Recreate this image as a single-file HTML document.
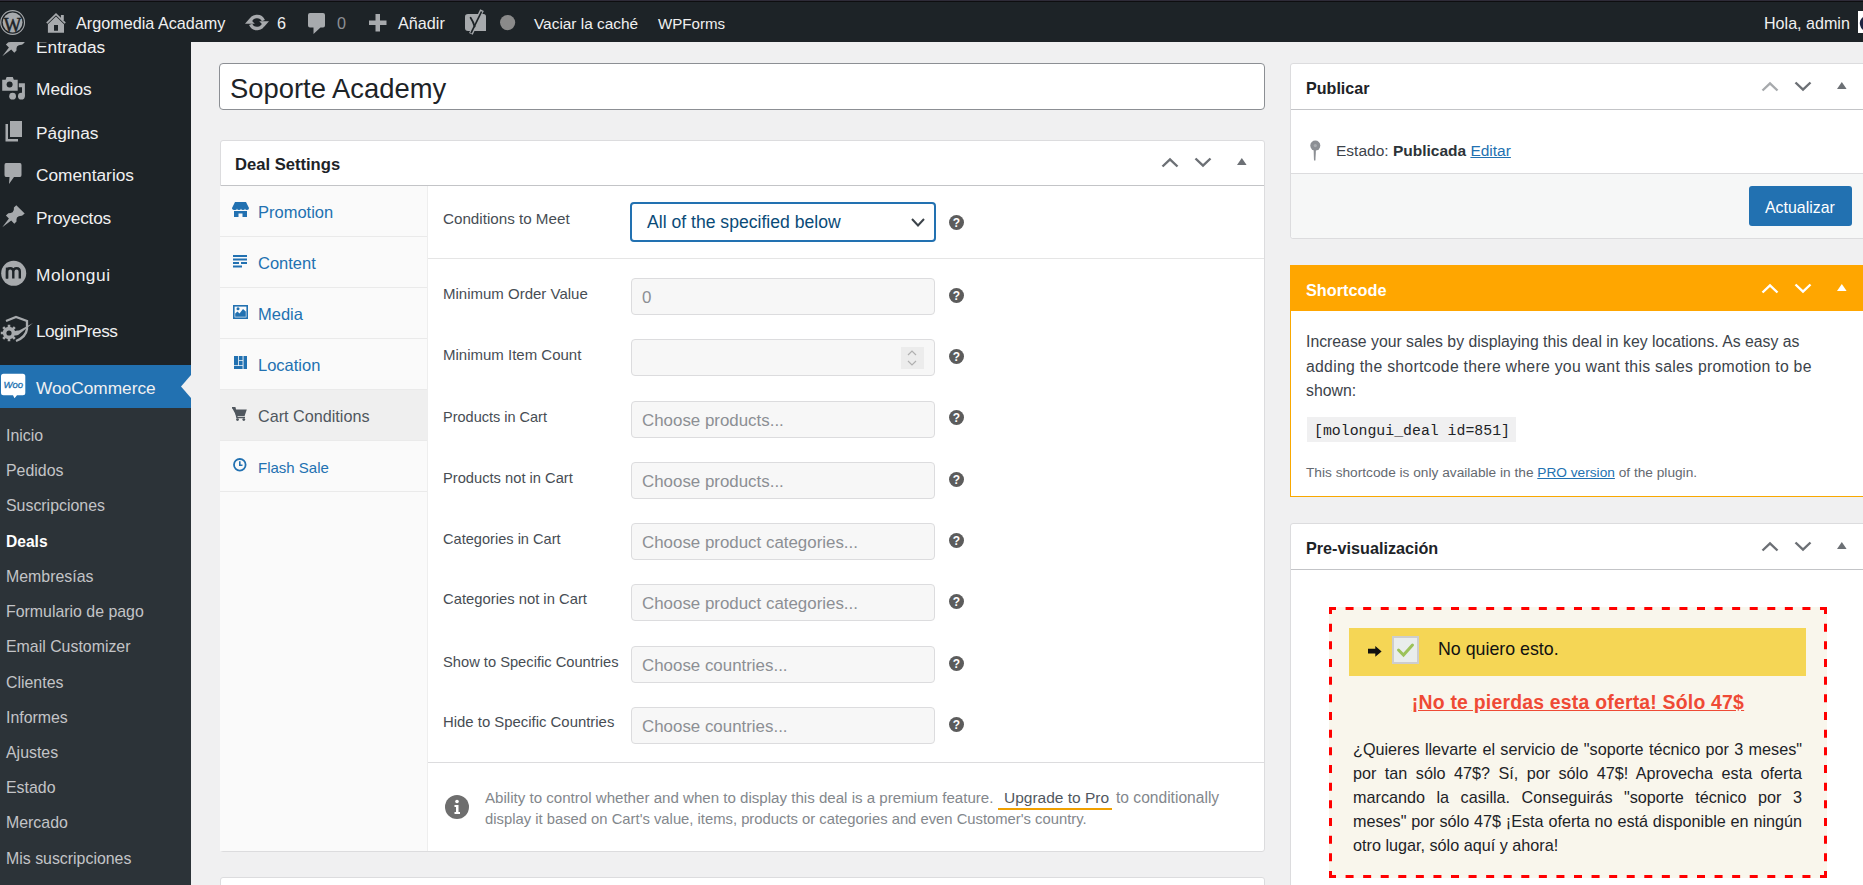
<!DOCTYPE html>
<html><head><meta charset="utf-8">
<style>
*{box-sizing:border-box;margin:0;padding:0}
html,body{width:1863px;height:885px;overflow:hidden;background:#f0f0f1;font-family:"Liberation Sans",sans-serif;color:#1d2327;position:relative}
.a{position:absolute;white-space:nowrap}
svg.a{overflow:visible}
</style></head><body>

<div class="a" style="left:0;top:0;width:1863px;height:42px;z-index:10">
<div class="a" style="left:0px;top:0px;width:1863px;height:42px;background:#1d2327"></div>
<div class="a" style="left:0px;top:0px;width:1863px;height:1px;background:#2e2b38"></div>
<div class="a" style="left:0px;top:1px;width:1863px;height:1px;background:#0e0e10"></div>
<svg class="a" style="left:0px;top:10px" width="26" height="26" viewBox="0 0 26 26"><circle cx="12.6" cy="12.5" r="11.9" fill="none" stroke="#a7aaad" stroke-width="1.1"/><circle cx="12.6" cy="12.5" r="9.9" fill="#a7aaad"/><text x="12.5" y="0" transform="translate(0,21.8) scale(1,1.18)" text-anchor="middle" font-family="Liberation Serif" font-size="18.5" fill="#1d2327" stroke="#1d2327" stroke-width="0.5">W</text></svg>
<svg class="a" style="left:46px;top:12px" width="21" height="22" viewBox="0 0 21 22"><path d="M0.8 11.2 L10 2.2 L19.2 11.2" fill="none" stroke="#a7aaad" stroke-width="1.7"/><rect x="14.9" y="3" width="2.9" height="5" fill="#a7aaad"/><path d="M1.9 12.3 L10 4.6 L18 12.3 V20.7 H1.9 Z M8 13 V18.7 H12 V13 Z" fill="#a7aaad" fill-rule="evenodd"/></svg>
<div class="a" style="left:76px;top:15px;font-size:16.2px;line-height:16.2px;color:#f0f0f1;font-weight:normal;">Argomedia Acadamy</div>
<svg class="a" style="left:245px;top:13px" width="25" height="19" viewBox="0 0 25 19"><path d="M5.2 8.8 A7 7 0 0 1 18.4 7.6" fill="none" stroke="#a7aaad" stroke-width="3.4"/><path d="M14.2 8.2 L24 8.2 L19.4 13.6 Z" fill="#a7aaad"/><path d="M18.8 10.2 A7 7 0 0 1 5.6 11.4" fill="none" stroke="#a7aaad" stroke-width="3.4"/><path d="M9.8 10.8 L0 10.8 L4.6 5.4 Z" fill="#a7aaad"/></svg>
<div class="a" style="left:277px;top:15px;font-size:16.2px;line-height:16.2px;color:#f0f0f1;font-weight:normal;">6</div>
<svg class="a" style="left:308px;top:12px" width="18" height="23" viewBox="0 0 18 23"><path d="M2 1 H15 Q17 1 17 3 V13.5 Q17 15.5 15 15.5 H12.5 L5.5 22 L5.5 15.5 H2 Q0 15.5 0 13.5 V3 Q0 1 2 1 Z" fill="#a7aaad"/></svg>
<div class="a" style="left:337px;top:15px;font-size:16.2px;line-height:16.2px;color:#8c8f94;font-weight:normal;">0</div>
<svg class="a" style="left:369px;top:14px" width="18" height="18" viewBox="0 0 18 18"><path d="M6.5 0 H11 V6.5 H17.5 V11 H11 V17.5 H6.5 V11 H0 V6.5 H6.5 Z" fill="#a7aaad"/></svg>
<div class="a" style="left:398px;top:15px;font-size:16.2px;line-height:16.2px;color:#f0f0f1;font-weight:normal;">Añadir</div>
<svg class="a" style="left:465px;top:9px" width="22" height="27" viewBox="0 0 22 27"><path d="M3 5 H18.5 Q21 5 21 7.5 V22 H3 Q0 22 0 19 V7.5 Q0 5 3 5 Z" fill="#a7aaad"/><path d="M17 1.2 L5.9 24.8" stroke="#a7aaad" stroke-width="4"/><path d="M16.6 2.5 L6 24.2" stroke="#1d2327" stroke-width="1.7"/><path d="M5.6 8.7 Q8.5 13 9.6 17.5" fill="none" stroke="#1d2327" stroke-width="1.8" stroke-linecap="round"/></svg>
<svg class="a" style="left:500px;top:15px" width="16" height="16" viewBox="0 0 16 16"><circle cx="7.6" cy="7.6" r="7.6" fill="#8a8a8a"/></svg>
<div class="a" style="left:534px;top:16px;font-size:15.4px;line-height:15.4px;color:#f0f0f1;font-weight:normal;">Vaciar la caché</div>
<div class="a" style="left:658px;top:16px;font-size:15.1px;line-height:15.1px;color:#f0f0f1;font-weight:normal;">WPForms</div>
<div class="a" style="left:1764px;top:15px;font-size:16.1px;line-height:16.1px;color:#f0f0f1;font-weight:normal;">Hola, admin</div>
<div class="a" style="left:1858px;top:11px;width:5px;height:22px;background:#fff"></div>
<svg class="a" style="left:1859px;top:15px" width="4" height="16" viewBox="0 0 4 16"><path d="M4 2 Q0 5 1 10 Q2 14 4 15 Z" fill="#1d2340"/></svg>
</div>
<div class="a" style="left:0px;top:42px;width:191px;height:843px;background:#1d2327"></div>
<div class="a" style="left:0px;top:408px;width:191px;height:477px;background:#2c3338"></div>
<div class="a" style="left:0px;top:365px;width:191px;height:43px;background:#2271b1"></div>
<svg class="a" style="left:181px;top:375px" width="10" height="23" viewBox="0 0 10 23"><path d="M10 0 L0 11.5 L10 23 Z" fill="#f0f0f1"/></svg>
<div class="a" style="left:36px;top:39px;font-size:17.3px;line-height:17.3px;color:#f0f0f1;font-weight:normal;letter-spacing:0px">Entradas</div>
<div class="a" style="left:36px;top:81px;font-size:17.3px;line-height:17.3px;color:#f0f0f1;font-weight:normal;letter-spacing:0px">Medios</div>
<div class="a" style="left:36px;top:124.6px;font-size:17.3px;line-height:17.3px;color:#f0f0f1;font-weight:normal;letter-spacing:0px">Páginas</div>
<div class="a" style="left:36px;top:166.7px;font-size:17.3px;line-height:17.3px;color:#f0f0f1;font-weight:normal;letter-spacing:0px">Comentarios</div>
<div class="a" style="left:36px;top:210px;font-size:17.3px;line-height:17.3px;color:#f0f0f1;font-weight:normal;letter-spacing:-0.2px">Proyectos</div>
<div class="a" style="left:36px;top:267px;font-size:17.3px;line-height:17.3px;color:#f0f0f1;font-weight:normal;letter-spacing:0.55px">Molongui</div>
<div class="a" style="left:36px;top:323px;font-size:17.3px;line-height:17.3px;color:#f0f0f1;font-weight:normal;letter-spacing:-0.5px">LoginPress</div>
<div class="a" style="left:36px;top:380px;font-size:17.3px;line-height:17.3px;color:#f0f0f1;font-weight:normal;letter-spacing:0px">WooCommerce</div>
<div class="a" style="left:6px;top:428.0px;font-size:15.9px;line-height:15.9px;color:#c3c4c7;font-weight:normal;">Inicio</div>
<div class="a" style="left:6px;top:463.22px;font-size:15.9px;line-height:15.9px;color:#c3c4c7;font-weight:normal;">Pedidos</div>
<div class="a" style="left:6px;top:498.44px;font-size:15.9px;line-height:15.9px;color:#c3c4c7;font-weight:normal;">Suscripciones</div>
<div class="a" style="left:6px;top:533.66px;font-size:15.6px;line-height:15.6px;color:#ffffff;font-weight:bold;">Deals</div>
<div class="a" style="left:6px;top:568.88px;font-size:15.9px;line-height:15.9px;color:#c3c4c7;font-weight:normal;">Membresías</div>
<div class="a" style="left:6px;top:604.1px;font-size:15.9px;line-height:15.9px;color:#c3c4c7;font-weight:normal;">Formulario de pago</div>
<div class="a" style="left:6px;top:639.3199999999999px;font-size:15.9px;line-height:15.9px;color:#c3c4c7;font-weight:normal;">Email Customizer</div>
<div class="a" style="left:6px;top:674.54px;font-size:15.9px;line-height:15.9px;color:#c3c4c7;font-weight:normal;">Clientes</div>
<div class="a" style="left:6px;top:709.76px;font-size:15.9px;line-height:15.9px;color:#c3c4c7;font-weight:normal;">Informes</div>
<div class="a" style="left:6px;top:744.98px;font-size:15.9px;line-height:15.9px;color:#c3c4c7;font-weight:normal;">Ajustes</div>
<div class="a" style="left:6px;top:780.2px;font-size:15.9px;line-height:15.9px;color:#c3c4c7;font-weight:normal;">Estado</div>
<div class="a" style="left:6px;top:815.42px;font-size:15.9px;line-height:15.9px;color:#c3c4c7;font-weight:normal;">Mercado</div>
<div class="a" style="left:6px;top:850.64px;font-size:15.9px;line-height:15.9px;color:#c3c4c7;font-weight:normal;">Mis suscripciones</div>
<svg class="a" style="left:0px;top:29px" width="28" height="30" viewBox="0 0 28 30"><path d="M16.3 5.2 L24.7 13.4 L22 15.8 Q18.6 15.6 17 17.6 Q16.2 19.5 16.5 21.5 L14.3 23.7 L11.2 20.6 L2.3 27.2 L8.9 18.4 L5.9 15.6 L8.3 13.3 Q10.6 13.4 12.6 12.2 Q14.4 10.4 13.9 7.6 Z" fill="#a7aaad"/></svg>
<svg class="a" style="left:0px;top:72px" width="28" height="30" viewBox="0 0 28 30"><path d="M2.2 7.8 H5.6 L6.6 4.9 H12.8 L13.8 7.8 H17.7 V18.8 H2.2 Z" fill="#a7aaad"/><circle cx="9.6" cy="12.6" r="3" fill="#1d2327"/><path d="M18.8 11.2 H24.9 V24.2 H22 V15.2 H18.8 Z" fill="#a7aaad"/><circle cx="12.6" cy="24.2" r="3.4" fill="#a7aaad"/><circle cx="21.4" cy="24.2" r="3.4" fill="#a7aaad"/></svg>
<svg class="a" style="left:4px;top:121px" width="18" height="22" viewBox="0 0 18 22"><rect x="6" y="0" width="12" height="16" fill="#a7aaad"/><path d="M4 3 V18 H14 V20.5 H1.5 V3 Z" fill="#a7aaad"/></svg>
<svg class="a" style="left:4px;top:163px" width="18" height="22" viewBox="0 0 18 22"><path d="M2 0 H16 Q17.5 0 17.5 2 V12 Q17.5 14 16 14 H10 L5 21 L5.5 14 H2 Q0.5 14 0.5 12 V2 Q0.5 0 2 0 Z" fill="#a7aaad"/></svg>
<svg class="a" style="left:0px;top:200px" width="28" height="30" viewBox="0 0 28 30"><path d="M16.3 5.2 L24.7 13.4 L22 15.8 Q18.6 15.6 17 17.6 Q16.2 19.5 16.5 21.5 L14.3 23.7 L11.2 20.6 L2.3 27.2 L8.9 18.4 L5.9 15.6 L8.3 13.3 Q10.6 13.4 12.6 12.2 Q14.4 10.4 13.9 7.6 Z" fill="#a7aaad"/></svg>
<svg class="a" style="left:1px;top:260px" width="26" height="26" viewBox="0 0 26 26"><circle cx="12.7" cy="13.3" r="12.5" fill="#a7aaad"/><path d="M6 18.5 V11.5 Q6 8.2 9.2 8.2 Q12.3 8.2 12.3 11.5 V18.5 M12.3 11.5 Q12.3 8.2 15.6 8.2 Q18.8 8.2 18.8 11.5 V18.5" fill="none" stroke="#1d2327" stroke-width="2.4"/><path d="M6 7.6 V18.5" stroke="#1d2327" stroke-width="2.4"/></svg>
<svg class="a" style="left:0px;top:315px" width="34" height="28" viewBox="0 0 34 28"><path d="M6 6 L16 2 L27 6 V14 Q26 22 16 26" fill="none" stroke="#a7aaad" stroke-width="2.3"/><circle cx="9" cy="18" r="6.2" fill="#a7aaad"/><path d="M9 9.8 V26.2 M0.8 18 H17.2 M3.2 12.2 L14.8 23.8 M14.8 12.2 L3.2 23.8" stroke="#a7aaad" stroke-width="2.6"/><circle cx="9" cy="18" r="2.6" fill="#1d2327"/><path d="M12 19.5 Q14 15 19 15.5 L33 8 L20 18.5 Q17 22 12 19.5 Z" fill="#a7aaad"/></svg>
<svg class="a" style="left:1px;top:373px" width="25" height="26" viewBox="0 0 25 26"><path d="M2.5 0.8 H21.8 Q24.3 0.8 24.3 3.3 V19.7 Q24.3 22.2 21.8 22.2 H16 L13.5 25.2 L12 22.2 H2.5 Q0 22.2 0 19.7 V3.3 Q0 0.8 2.5 0.8 Z" fill="#fff"/><text x="12.2" y="14.8" text-anchor="middle" font-family="Liberation Sans" font-size="9.5" font-style="italic" fill="#2271b1" stroke="#2271b1" stroke-width="0.3">Woo</text></svg>
<div class="a" style="left:219px;top:63px;width:1046px;height:47px;background:#fff;border:1px solid #8c8f94;border-radius:4px"></div>
<div class="a" style="left:230px;top:75px;font-size:27.4px;line-height:27.4px;color:#1d2327;font-weight:normal;">Soporte Academy</div>
<div class="a" style="left:220px;top:140px;width:1045px;height:712px;background:#fff;border:1px solid #dcdcde;border-radius:3px"></div>
<div class="a" style="left:221px;top:185px;width:1043px;height:1px;background:#c3c4c7"></div>
<div class="a" style="left:235px;top:157px;font-size:16.6px;line-height:16.6px;color:#1d2327;font-weight:bold;">Deal Settings</div>
<svg class="a" style="left:1161px;top:157px" width="18" height="11" viewBox="0 0 18 11"><path d="M1.5 9.5 L9 2.3 L16.5 9.5" fill="none" stroke="#6c7075" stroke-width="2.4"/></svg>
<svg class="a" style="left:1194px;top:157px" width="18" height="11" viewBox="0 0 18 11"><path d="M1.5 1.5 L9 8.7 L16.5 1.5" fill="none" stroke="#6c7075" stroke-width="2.4"/></svg>
<svg class="a" style="left:1237px;top:158px" width="10" height="8" viewBox="0 0 10 8"><path d="M0 7 L4.8 0 L9.6 7 Z" fill="#6c7075"/></svg>
<div class="a" style="left:220px;top:186px;width:207px;height:665px;background:#fafafa"></div>
<div class="a" style="left:427px;top:186px;width:1px;height:665px;background:#eeeeee"></div>
<div class="a" style="left:220px;top:236px;width:207px;height:1px;background:#eaeaea"></div>
<div class="a" style="left:258px;top:204px;font-size:16.5px;line-height:16.5px;color:#2271b1;font-weight:normal;">Promotion</div>
<div class="a" style="left:220px;top:287px;width:207px;height:1px;background:#eaeaea"></div>
<div class="a" style="left:258px;top:255px;font-size:16.5px;line-height:16.5px;color:#2271b1;font-weight:normal;">Content</div>
<div class="a" style="left:220px;top:338px;width:207px;height:1px;background:#eaeaea"></div>
<div class="a" style="left:258px;top:306px;font-size:16.5px;line-height:16.5px;color:#2271b1;font-weight:normal;">Media</div>
<div class="a" style="left:220px;top:389px;width:207px;height:1px;background:#eaeaea"></div>
<div class="a" style="left:258px;top:357px;font-size:16.5px;line-height:16.5px;color:#2271b1;font-weight:normal;">Location</div>
<div class="a" style="left:220px;top:390px;width:207px;height:50px;background:#efefef"></div>
<div class="a" style="left:220px;top:440px;width:207px;height:1px;background:#eaeaea"></div>
<div class="a" style="left:258px;top:408px;font-size:16.2px;line-height:16.2px;color:#50575e;font-weight:normal;">Cart Conditions</div>
<div class="a" style="left:220px;top:491px;width:207px;height:1px;background:#eaeaea"></div>
<div class="a" style="left:258px;top:460px;font-size:15.0px;line-height:15.0px;color:#2271b1;font-weight:normal;">Flash Sale</div>
<svg class="a" style="left:232px;top:202px" width="17" height="16" viewBox="0 0 17 16"><path d="M3 0 H14 L17 6 Q17 8 15 8 Q13 8 13 6.5 Q13 8 11 8 Q9 8 9 6.5 Q9 8 7 8 Q5 8 5 6.5 Q5 8 3 8 Q0 8 0 6 Z" fill="#2271b1"/><path d="M2 9 H15 V15 H10.5 V11.5 H6.5 V15 H2 Z" fill="#2271b1"/></svg>
<svg class="a" style="left:233px;top:255px" width="15" height="13" viewBox="0 0 15 13"><path d="M0 1 H14 M0 4.5 H14 M0 8 H6 M8 8 H14 M0 11.5 H9" stroke="#2271b1" stroke-width="1.8"/></svg>
<svg class="a" style="left:233px;top:305px" width="15" height="14" viewBox="0 0 15 14"><rect x="0.8" y="0.8" width="13.4" height="12.4" fill="none" stroke="#2271b1" stroke-width="1.6"/><path d="M2.2 11.8 V8.5 L4.5 6.5 L6.5 8.5 L10 4 L12.8 6.5 V11.8 Z" fill="#2271b1"/><circle cx="5" cy="3.8" r="1.5" fill="#2271b1"/></svg>
<svg class="a" style="left:234px;top:356px" width="13" height="13" viewBox="0 0 13 13"><path d="M0 0 H4.2 V9.2 H0 Z M5 0 H8.6 V4.3 H5 Z M5 5.1 H8.6 V9.2 H5 Z M9.5 0 H13 V13 H9.5 Z M0 10 H8.6 V13 H0 Z" fill="#2271b1"/></svg>
<svg class="a" style="left:232px;top:407px" width="15" height="14" viewBox="0 0 15 14"><path d="M0 0.8 H2.8 L3.8 2.5 H14.8 L12.6 9 H4.5 Z" fill="#50575e"/><path d="M0 0.8 H2.8 L5 10.5 H13" fill="none" stroke="#50575e" stroke-width="1.6"/><circle cx="5.5" cy="12.6" r="1.4" fill="#50575e"/><circle cx="11.8" cy="12.6" r="1.4" fill="#50575e"/></svg>
<svg class="a" style="left:233px;top:458px" width="14" height="14" viewBox="0 0 14 14"><circle cx="6.8" cy="6.8" r="5.8" fill="none" stroke="#2271b1" stroke-width="1.8"/><path d="M6.8 3.3 V7.3 H9.5" fill="none" stroke="#2271b1" stroke-width="1.6"/></svg>
<div class="a" style="left:443px;top:211px;font-size:15.2px;line-height:15.2px;color:#474d54;font-weight:normal;">Conditions to Meet</div>
<div class="a" style="left:630px;top:202px;width:306px;height:40px;background:#fff;border:2px solid #2271b1;border-radius:4px"></div>
<div class="a" style="left:647px;top:213.5px;font-size:17.6px;line-height:17.6px;color:#0a4b78;font-weight:normal;">All of the specified below</div>
<svg class="a" style="left:911px;top:218px" width="14" height="9" viewBox="0 0 14 9"><path d="M1 1 L7 7.5 L13 1" fill="none" stroke="#3c434a" stroke-width="2"/></svg>
<svg class="a" style="left:949px;top:215px" width="15" height="15" viewBox="0 0 15 15"><circle cx="7.5" cy="7.5" r="7.5" fill="#5c5c5c"/><text x="7.5" y="12" text-anchor="middle" font-family="Liberation Sans" font-size="12" font-weight="bold" fill="#fff">?</text></svg>
<div class="a" style="left:428px;top:258px;width:836px;height:1px;background:#e5e5e5"></div>
<div class="a" style="left:631px;top:278px;width:304px;height:37px;background:#f7f7f7;border:1px solid #dcdcde;border-radius:4px"></div>
<div class="a" style="left:443px;top:286px;font-size:15px;line-height:15px;color:#474d54;font-weight:normal;">Minimum Order Value</div>
<div class="a" style="left:642px;top:290px;font-size:16.9px;line-height:16.9px;color:#8c8f94;font-weight:normal;">0</div>
<svg class="a" style="left:949px;top:288px" width="15" height="15" viewBox="0 0 15 15"><circle cx="7.5" cy="7.5" r="7.5" fill="#5c5c5c"/><text x="7.5" y="12" text-anchor="middle" font-family="Liberation Sans" font-size="12" font-weight="bold" fill="#fff">?</text></svg>
<div class="a" style="left:631px;top:339px;width:304px;height:37px;background:#f7f7f7;border:1px solid #dcdcde;border-radius:4px"></div>
<div class="a" style="left:443px;top:347px;font-size:15px;line-height:15px;color:#474d54;font-weight:normal;">Minimum Item Count</div>
<div class="a" style="left:901px;top:347px;width:23px;height:22px;background:#ececec"></div>
<svg class="a" style="left:905px;top:349px" width="14" height="18" viewBox="0 0 14 18"><path d="M3 6 L7 2 L11 6 M3 12 L7 16 L11 12" fill="none" stroke="#b0b0b0" stroke-width="1.2"/></svg>
<svg class="a" style="left:949px;top:349px" width="15" height="15" viewBox="0 0 15 15"><circle cx="7.5" cy="7.5" r="7.5" fill="#5c5c5c"/><text x="7.5" y="12" text-anchor="middle" font-family="Liberation Sans" font-size="12" font-weight="bold" fill="#fff">?</text></svg>
<div class="a" style="left:631px;top:401px;width:304px;height:37px;background:#f7f7f7;border:1px solid #dcdcde;border-radius:4px"></div>
<div class="a" style="left:443px;top:410px;font-size:14.5px;line-height:14.5px;color:#474d54;font-weight:normal;">Products in Cart</div>
<div class="a" style="left:642px;top:413px;font-size:16.9px;line-height:16.9px;color:#8c8f94;font-weight:normal;">Choose products...</div>
<svg class="a" style="left:949px;top:410px" width="15" height="15" viewBox="0 0 15 15"><circle cx="7.5" cy="7.5" r="7.5" fill="#5c5c5c"/><text x="7.5" y="12" text-anchor="middle" font-family="Liberation Sans" font-size="12" font-weight="bold" fill="#fff">?</text></svg>
<div class="a" style="left:631px;top:462px;width:304px;height:37px;background:#f7f7f7;border:1px solid #dcdcde;border-radius:4px"></div>
<div class="a" style="left:443px;top:471px;font-size:14.7px;line-height:14.7px;color:#474d54;font-weight:normal;">Products not in Cart</div>
<div class="a" style="left:642px;top:474px;font-size:16.9px;line-height:16.9px;color:#8c8f94;font-weight:normal;">Choose products...</div>
<svg class="a" style="left:949px;top:472px" width="15" height="15" viewBox="0 0 15 15"><circle cx="7.5" cy="7.5" r="7.5" fill="#5c5c5c"/><text x="7.5" y="12" text-anchor="middle" font-family="Liberation Sans" font-size="12" font-weight="bold" fill="#fff">?</text></svg>
<div class="a" style="left:631px;top:523px;width:304px;height:37px;background:#f7f7f7;border:1px solid #dcdcde;border-radius:4px"></div>
<div class="a" style="left:443px;top:532px;font-size:14.6px;line-height:14.6px;color:#474d54;font-weight:normal;">Categories in Cart</div>
<div class="a" style="left:642px;top:535px;font-size:16.9px;line-height:16.9px;color:#8c8f94;font-weight:normal;">Choose product categories...</div>
<svg class="a" style="left:949px;top:533px" width="15" height="15" viewBox="0 0 15 15"><circle cx="7.5" cy="7.5" r="7.5" fill="#5c5c5c"/><text x="7.5" y="12" text-anchor="middle" font-family="Liberation Sans" font-size="12" font-weight="bold" fill="#fff">?</text></svg>
<div class="a" style="left:631px;top:584px;width:304px;height:37px;background:#f7f7f7;border:1px solid #dcdcde;border-radius:4px"></div>
<div class="a" style="left:443px;top:592px;font-size:14.8px;line-height:14.8px;color:#474d54;font-weight:normal;">Categories not in Cart</div>
<div class="a" style="left:642px;top:596px;font-size:16.9px;line-height:16.9px;color:#8c8f94;font-weight:normal;">Choose product categories...</div>
<svg class="a" style="left:949px;top:594px" width="15" height="15" viewBox="0 0 15 15"><circle cx="7.5" cy="7.5" r="7.5" fill="#5c5c5c"/><text x="7.5" y="12" text-anchor="middle" font-family="Liberation Sans" font-size="12" font-weight="bold" fill="#fff">?</text></svg>
<div class="a" style="left:631px;top:646px;width:304px;height:37px;background:#f7f7f7;border:1px solid #dcdcde;border-radius:4px"></div>
<div class="a" style="left:443px;top:655px;font-size:14.7px;line-height:14.7px;color:#474d54;font-weight:normal;">Show to Specific Countries</div>
<div class="a" style="left:642px;top:658px;font-size:16.9px;line-height:16.9px;color:#8c8f94;font-weight:normal;">Choose countries...</div>
<svg class="a" style="left:949px;top:656px" width="15" height="15" viewBox="0 0 15 15"><circle cx="7.5" cy="7.5" r="7.5" fill="#5c5c5c"/><text x="7.5" y="12" text-anchor="middle" font-family="Liberation Sans" font-size="12" font-weight="bold" fill="#fff">?</text></svg>
<div class="a" style="left:631px;top:707px;width:304px;height:37px;background:#f7f7f7;border:1px solid #dcdcde;border-radius:4px"></div>
<div class="a" style="left:443px;top:715px;font-size:14.9px;line-height:14.9px;color:#474d54;font-weight:normal;">Hide to Specific Countries</div>
<div class="a" style="left:642px;top:719px;font-size:16.9px;line-height:16.9px;color:#8c8f94;font-weight:normal;">Choose countries...</div>
<svg class="a" style="left:949px;top:717px" width="15" height="15" viewBox="0 0 15 15"><circle cx="7.5" cy="7.5" r="7.5" fill="#5c5c5c"/><text x="7.5" y="12" text-anchor="middle" font-family="Liberation Sans" font-size="12" font-weight="bold" fill="#fff">?</text></svg>
<div class="a" style="left:428px;top:762px;width:836px;height:1px;background:#dcdcde"></div>
<svg class="a" style="left:445px;top:795px" width="24" height="24" viewBox="0 0 24 24"><circle cx="12" cy="12" r="12" fill="#6e6e6e"/><circle cx="12" cy="6.5" r="1.8" fill="#fff"/><path d="M9.5 10 H13.5 V17 H15 V19 H9.5 V17 H11 V12 H9.5 Z" fill="#fff"/></svg>
<div class="a" style="left:485px;top:790px;font-size:15.1px;line-height:15.1px;color:#83878c;font-weight:normal;">Ability to control whether and when to display this deal is a premium feature.</div>
<div class="a" style="left:1004px;top:790px;font-size:15.5px;line-height:15.5px;color:#50575e;font-weight:normal;">Upgrade to Pro</div>
<div class="a" style="left:998px;top:808px;width:114px;height:2px;background:#f0a000"></div>
<div class="a" style="left:1116px;top:790px;font-size:15.6px;line-height:15.6px;color:#83878c;font-weight:normal;">to conditionally</div>
<div class="a" style="left:485px;top:812px;font-size:14.8px;line-height:14.8px;color:#83878c;font-weight:normal;">display it based on Cart&#39;s value, items, products or categories and even Customer&#39;s country.</div>
<div class="a" style="left:220px;top:877px;width:1045px;height:12px;background:#fff;border:1px solid #dcdcde;border-radius:3px"></div>
<div class="a" style="left:1290px;top:63px;width:600px;height:176px;background:#fff;border:1px solid #dcdcde;border-radius:3px"></div>
<div class="a" style="left:1291px;top:109px;width:600px;height:1px;background:#c3c4c7"></div>
<div class="a" style="left:1306px;top:79.8px;font-size:16.1px;line-height:16.1px;color:#1d2327;font-weight:bold;">Publicar</div>
<svg class="a" style="left:1761px;top:81px" width="18" height="11" viewBox="0 0 18 11"><path d="M1.5 9.5 L9 2.3 L16.5 9.5" fill="none" stroke="#a7aaad" stroke-width="2.4"/></svg>
<svg class="a" style="left:1794px;top:81px" width="18" height="11" viewBox="0 0 18 11"><path d="M1.5 1.5 L9 8.7 L16.5 1.5" fill="none" stroke="#6c7075" stroke-width="2.4"/></svg>
<svg class="a" style="left:1837px;top:82px" width="10" height="8" viewBox="0 0 10 8"><path d="M0 7 L4.8 0 L9.6 7 Z" fill="#6c7075"/></svg>
<svg class="a" style="left:1309px;top:140px" width="12" height="22" viewBox="0 0 12 22"><circle cx="6.3" cy="5.6" r="5" fill="#8c8f94"/><circle cx="6.3" cy="5.6" r="1.6" fill="#a9acb0"/><path d="M4.6 9 H7 L6.4 20.5 H5 Z" fill="#8c8f94"/></svg>
<div class="a" style="left:1336px;top:142.6px;font-size:15.5px;line-height:15.5px;color:#3c434a;font-weight:normal;">Estado: <b style="color:#2c3338">Publicada</b> <span style="color:#2271b1;text-decoration:underline">Editar</span></div>
<div class="a" style="left:1291px;top:173px;width:600px;height:65px;background:#f6f7f7;border-top:1px solid #dcdcde;border-bottom-left-radius:3px"></div>
<div class="a" style="left:1749px;top:186px;width:103px;height:40px;background:#2271b1;border-radius:3px"></div>
<div class="a" style="left:1765px;top:199.7px;font-size:15.9px;line-height:15.9px;color:#ffffff;font-weight:normal;">Actualizar</div>
<div class="a" style="left:1290px;top:265px;width:600px;height:232px;background:#fff;border:1px solid #f9a800"></div>
<div class="a" style="left:1290px;top:265px;width:600px;height:46px;background:#ffa600"></div>
<div class="a" style="left:1306px;top:281.7px;font-size:16.3px;line-height:16.3px;color:#ffffff;font-weight:bold;">Shortcode</div>
<svg class="a" style="left:1761px;top:283px" width="18" height="11" viewBox="0 0 18 11"><path d="M1.5 9.5 L9 2.3 L16.5 9.5" fill="none" stroke="#ffffff" stroke-width="2.4"/></svg>
<svg class="a" style="left:1794px;top:283px" width="18" height="11" viewBox="0 0 18 11"><path d="M1.5 1.5 L9 8.7 L16.5 1.5" fill="none" stroke="#ffffff" stroke-width="2.4"/></svg>
<svg class="a" style="left:1837px;top:284px" width="10" height="8" viewBox="0 0 10 8"><path d="M0 7 L4.8 0 L9.6 7 Z" fill="#ffffff"/></svg>
<div class="a" style="left:1306px;top:334.3px;font-size:15.8px;line-height:15.8px;color:#3c434a;font-weight:normal;">Increase your sales by displaying this deal in key locations. As easy as</div>
<div class="a" style="left:1306px;top:358.6px;font-size:15.8px;line-height:15.8px;color:#3c434a;font-weight:normal;letter-spacing:0.27px">adding the shortcode there where you want this sales promotion to be</div>
<div class="a" style="left:1306px;top:382.90000000000003px;font-size:15.8px;line-height:15.8px;color:#3c434a;font-weight:normal;">shown:</div>
<div class="a" style="left:1307px;top:417px;width:209px;height:25px;background:#f0f0f1"></div>
<div class="a" style="left:1314px;top:423.5px;font-size:14.85px;line-height:14.85px;color:#1d2327;font-weight:normal;font-family:'Liberation Mono',monospace;">[molongui_deal id=851]</div>
<div class="a" style="left:1306px;top:466px;font-size:13.7px;line-height:13.7px;color:#646970;font-weight:normal;">This shortcode is only available in the <span style="color:#2271b1;text-decoration:underline">PRO version</span> of the plugin.</div>
<div class="a" style="left:1290px;top:523px;width:600px;height:400px;background:#fff;border:1px solid #dcdcde;border-radius:3px"></div>
<div class="a" style="left:1291px;top:569px;width:600px;height:1px;background:#c3c4c7"></div>
<div class="a" style="left:1306px;top:539.6px;font-size:16.2px;line-height:16.2px;color:#1d2327;font-weight:bold;">Pre-visualización</div>
<svg class="a" style="left:1761px;top:541px" width="18" height="11" viewBox="0 0 18 11"><path d="M1.5 9.5 L9 2.3 L16.5 9.5" fill="none" stroke="#6c7075" stroke-width="2.4"/></svg>
<svg class="a" style="left:1794px;top:541px" width="18" height="11" viewBox="0 0 18 11"><path d="M1.5 1.5 L9 8.7 L16.5 1.5" fill="none" stroke="#6c7075" stroke-width="2.4"/></svg>
<svg class="a" style="left:1837px;top:542px" width="10" height="8" viewBox="0 0 10 8"><path d="M0 7 L4.8 0 L9.6 7 Z" fill="#6c7075"/></svg>
<div class="a" style="left:1329px;top:607px;width:498px;height:271px;background:#f9f6ec"></div>
<svg class="a" style="left:0;top:0" width="1863" height="885">
<line x1="1329" y1="608.5" x2="1827" y2="608.5" stroke="#ff0000" stroke-width="3" stroke-dasharray="8 9.571" stroke-dashoffset="1"/>
<line x1="1827" y1="876.5" x2="1329" y2="876.5" stroke="#ff0000" stroke-width="3" stroke-dasharray="8 9.571" stroke-dashoffset="1"/>
<line x1="1330.5" y1="607" x2="1330.5" y2="878" stroke="#ff0000" stroke-width="3" stroke-dasharray="8 9.667" stroke-dashoffset="1"/>
<line x1="1825.5" y1="878" x2="1825.5" y2="607" stroke="#ff0000" stroke-width="3" stroke-dasharray="8 9.667" stroke-dashoffset="1"/>
</svg>
<div class="a" style="left:1349px;top:628px;width:457px;height:48px;background:#f5d655"></div>
<svg class="a" style="left:1368px;top:646px" width="14" height="11" viewBox="0 0 14 11"><path d="M0 2.7 H7.3 V0 L13.6 5.4 L7.3 10.8 V7.6 H0 Z" fill="#111"/></svg>
<div class="a" style="left:1392px;top:636px;width:27px;height:28px;background:#e9edec;border:2px solid #cdcdcd"></div>
<svg class="a" style="left:1397px;top:643px" width="18" height="15" viewBox="0 0 18 15"><path d="M1.5 7 L6.5 12 L15.5 2" fill="none" stroke="#9cc25a" stroke-width="3" stroke-linecap="round"/></svg>
<div class="a" style="left:1438px;top:641px;font-size:17.8px;line-height:17.8px;color:#111111;font-weight:normal;">No quiero esto.</div>
<div class="a" style="left:1329px;top:692.6px;font-size:19.4px;line-height:19.4px;color:#ef4a35;font-weight:bold;width:498px;text-align:center;letter-spacing:0.22px"><u>¡No te pierdas esta oferta! Sólo 47$</u></div>
<div class="a" style="left:1353px;top:740.5px;font-size:16.2px;line-height:16.2px;color:#1d2327;font-weight:normal;width:449px;text-align:justify;text-align-last:justify;white-space:normal">¿Quieres llevarte el servicio de "soporte técnico por 3 meses"</div>
<div class="a" style="left:1353px;top:764.65px;font-size:16.2px;line-height:16.2px;color:#1d2327;font-weight:normal;width:449px;text-align:justify;text-align-last:justify;white-space:normal">por tan sólo 47$? Sí, por sólo 47$! Aprovecha esta oferta</div>
<div class="a" style="left:1353px;top:788.8px;font-size:16.2px;line-height:16.2px;color:#1d2327;font-weight:normal;width:449px;text-align:justify;text-align-last:justify;white-space:normal">marcando la casilla. Conseguirás "soporte técnico por 3</div>
<div class="a" style="left:1353px;top:812.95px;font-size:16.2px;line-height:16.2px;color:#1d2327;font-weight:normal;width:449px;text-align:justify;text-align-last:justify;white-space:normal">meses" por sólo 47$ ¡Esta oferta no está disponible en ningún</div>
<div class="a" style="left:1353px;top:837.1px;font-size:16.2px;line-height:16.2px;color:#1d2327;font-weight:normal;">otro lugar, sólo aquí y ahora!</div>
<div class="a" style="left:0;top:0;width:1863px;height:0"></div>
</body></html>
